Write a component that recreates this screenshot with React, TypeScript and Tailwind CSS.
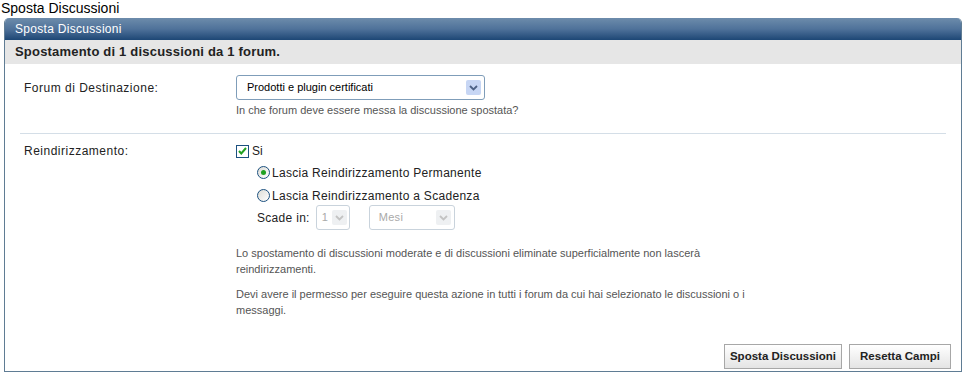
function Chevron({ color }: { color: string }) {
  return (
    <svg width="9" height="6" viewBox="0 0 9 6">
      <path d="M1 1l3.5 3.5L8 1" fill="none" stroke={color} strokeWidth="1.8" />
    </svg>
  );
}

function SelectBox({
  value,
  width,
  pad,
  disabled,
}: {
  value: string;
  width: string;
  pad: string;
  disabled?: boolean;
}) {
  return (
    <div
      className={`flex h-[25px] flex-shrink-0 items-center justify-between rounded-[3px] border bg-white ${pad} ${width} ${
        disabled ? "border-[#c9d3dc] text-[#a9a9a9]" : "border-[#7f9db9] text-black"
      }`}
    >
      <span className="text-[11px]">{value}</span>
      <span
        className={`flex h-[15px] w-[15px] items-center justify-center rounded-[2px] ${
          disabled ? "bg-[#eef0f2]" : "bg-[#c7d6f4]"
        }`}
      >
        <Chevron color={disabled ? "#c3c3c3" : "#4d6185"} />
      </span>
    </div>
  );
}

function Radio({ checked }: { checked?: boolean }) {
  return (
    <span className="flex h-[13px] w-[13px] items-center justify-center rounded-full border border-[#1c5180] bg-gradient-to-br from-[#dcdcd6] to-white">
      {checked && <span className="h-[5px] w-[5px] rounded-full bg-[#21a121]" />}
    </span>
  );
}

export default function App() {
  return (
    <div className="h-[376px] w-[965px] bg-white font-['Liberation_Sans',Arial,sans-serif] text-[#222]">
      {/* Page title */}
      <div className="h-[18px] pl-[1px] text-[14px] leading-[16px] text-black">
        Sposta Discussioni
      </div>

      {/* Panel */}
      <div className="ml-[4px] flex h-[354px] w-[958px] flex-col overflow-hidden rounded-t-[5px] border-x border-b border-[#5f7c94]">
        <div className="flex h-[22px] flex-shrink-0 items-center bg-gradient-to-b from-[#6d8cab] via-[#4f729a] to-[#1d4775] pl-[10px] text-[12px] tracking-[0.3px] text-white">
          Sposta Discussioni
        </div>
        <div className="flex h-[24px] flex-shrink-0 items-center bg-[#e6e6e6] pl-[10px] text-[13px] font-bold tracking-[0.2px] text-[#222]">
          Spostamento di 1 discussioni da 1 forum.
        </div>

        {/* Destination row */}
        <div className="grid grid-cols-[212px_1fr] pl-[19px] pt-[11px] pb-[16px]">
          <div className="pt-[4px] text-[12px] tracking-[0.5px] text-[#222]">
            Forum di Destinazione:
          </div>
          <div>
            <SelectBox value="Prodotti e plugin certificati" width="w-[249px]" pad="pl-[10px] pr-[3px]" />
            <div className="mt-[3px] text-[11px] leading-[14px] text-[#555]">
              In che forum deve essere messa la discussione spostata?
            </div>
          </div>
        </div>

        <div className="mx-[15px] h-px bg-[#d4dee7]" />

        {/* Redirect row */}
        <div className="grid grid-cols-[212px_1fr] pl-[19px] pt-[9px]">
          <div className="text-[12px] leading-[16px] tracking-[0.5px] text-[#222]">
            Reindirizzamento:
          </div>
          <div>
            <div className="flex h-[16px] items-center gap-[3px] text-[12px]">
              <span className="flex h-[13px] w-[13px] items-center justify-center border border-[#1c5180] bg-white">
                <svg width="9" height="8" viewBox="0 0 9 8">
                  <path d="M1 4l2.3 2.5L8 1" fill="none" stroke="#21a121" strokeWidth="2" />
                </svg>
              </span>
              Si
            </div>
            <div className="ml-[21px] mt-[7px] flex flex-col gap-[10px] text-[12px] tracking-[0.3px]">
              <div className="flex h-[13px] items-center gap-[2px]">
                <Radio checked />
                Lascia Reindirizzamento Permanente
              </div>
              <div className="flex h-[13px] items-center gap-[2px]">
                <Radio />
                Lascia Reindirizzamento a Scadenza
              </div>
            </div>
            <div className="ml-[21px] mt-[3px] flex items-center text-[12px] tracking-[0.3px]">
              <span className="mr-[6px]">Scade in:</span>
              <SelectBox value="1" width="w-[34px]" pad="pl-[5px] pr-[2px]" disabled />
              <div className="w-[19px]" />
              <SelectBox value="Mesi" width="w-[86px]" pad="pl-[9px] pr-[3px]" disabled />
            </div>
            <div className="mt-[15px] w-[520px] text-[11px] leading-[16px] text-[#555]">
              <p>
                Lo spostamento di discussioni moderate e di discussioni eliminate superficialmente non lascerà
                <br />
                reindirizzamenti.
              </p>
              <p className="mt-[9px]">
                Devi avere il permesso per eseguire questa azione in tutti i forum da cui hai selezionato le discussioni o i
                <br />
                messaggi.
              </p>
            </div>
          </div>
        </div>

        {/* Buttons */}
        <div className="mt-auto flex justify-end gap-[7px] pb-[2px] pr-[10px]">
          <button className="h-[25px] w-[118px] border border-[#a7a7a7] bg-gradient-to-b from-white to-[#e4e4e4] text-[11.5px] font-bold text-[#222]">
            Sposta Discussioni
          </button>
          <button className="h-[25px] w-[102px] border border-[#a7a7a7] bg-gradient-to-b from-white to-[#e4e4e4] text-[11.5px] font-bold text-[#222]">
            Resetta Campi
          </button>
        </div>
      </div>
    </div>
  );
}
